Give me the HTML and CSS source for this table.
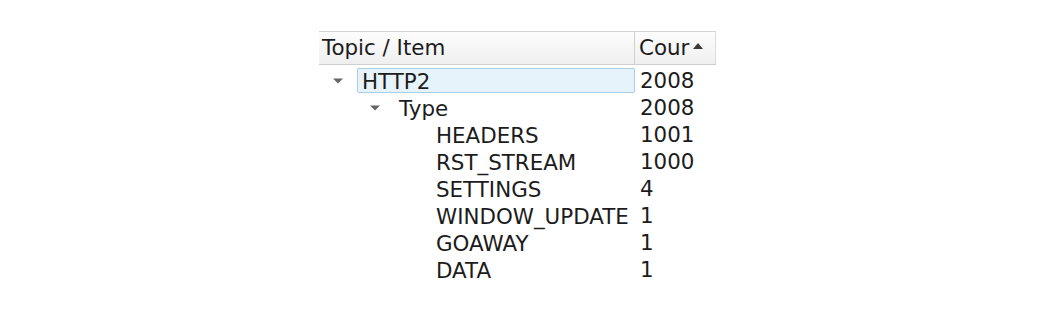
FILE: index.html
```html
<!DOCTYPE html>
<html>
<head>
<meta charset="utf-8">
<link rel="stylesheet" href="styles.css">
</head>
<body>
<div class="tree">
  <div class="header">
    <div class="hcell hname">Topic / Item</div>
    <div class="hcell hcount">Cour<span class="sort"></span></div>
  </div>
  <div class="body">
    <div class="row">
      <div class="name"><span class="arrow"><svg width="10" height="6" viewBox="0 0 10 6"><path d="M0 0.5H10L5 5.5Z"/></svg></span><span class="label sel">HTTP2</span></div>
      <div class="count">2008</div>
    </div>
    <div class="row">
      <div class="name"><span class="indent"></span><span class="arrow"><svg width="10" height="6" viewBox="0 0 10 6"><path d="M0 0.5H10L5 5.5Z"/></svg></span><span class="label">Type</span></div>
      <div class="count">2008</div>
    </div>
    <div class="row">
      <div class="name"><span class="indent"></span><span class="indent"></span><span class="arrow"></span><span class="label">HEADERS</span></div>
      <div class="count">1001</div>
    </div>
    <div class="row">
      <div class="name"><span class="indent"></span><span class="indent"></span><span class="arrow"></span><span class="label">RST_STREAM</span></div>
      <div class="count">1000</div>
    </div>
    <div class="row">
      <div class="name"><span class="indent"></span><span class="indent"></span><span class="arrow"></span><span class="label">SETTINGS</span></div>
      <div class="count">4</div>
    </div>
    <div class="row">
      <div class="name"><span class="indent"></span><span class="indent"></span><span class="arrow"></span><span class="label">WINDOW_UPDATE</span></div>
      <div class="count">1</div>
    </div>
    <div class="row">
      <div class="name"><span class="indent"></span><span class="indent"></span><span class="arrow"></span><span class="label">GOAWAY</span></div>
      <div class="count">1</div>
    </div>
    <div class="row">
      <div class="name"><span class="indent"></span><span class="indent"></span><span class="arrow"></span><span class="label">DATA</span></div>
      <div class="count">1</div>
    </div>
  </div>
</div>
</body>
</html>
```

FILE: styles.css
```css
html, body {
  margin: 0;
  padding: 0;
  background: #ffffff;
}
body {
  font-family: "DejaVu Sans", sans-serif;
  font-size: 21.4px;
  color: #1c1c1c;
}
.tree {
  padding: 31px 0 0 319px;
  width: 397px;
}
.header {
  display: grid;
  grid-template-columns: 316px 81px;
  height: 32px;
  border-top: 1px solid #d4d4d4;
  border-bottom: 1px solid #cfcfcf;
  background: linear-gradient(#fdfdfd, #efefef);
}
.hcell {
  display: flex;
  align-items: center;
  line-height: 32px;
  white-space: nowrap;
  overflow: hidden;
}
.hname {
  padding-left: 3px;
  border-right: 1px solid #d0d0d0;
}
.hcount {
  padding-left: 4px;
  border-right: 1px solid #dcdcdc;
}
.sort {
  display: inline-block;
  margin-left: 4px;
  margin-top: -5px;
  width: 0;
  height: 0;
  border-left: 5px solid transparent;
  border-right: 5px solid transparent;
  border-bottom: 6px solid #3a3a3a;
}
.body {
  padding-top: 2px;
}
.row {
  display: grid;
  grid-template-columns: 316px 81px;
  height: 27px;
}
.name {
  display: flex;
  align-items: center;
  white-space: nowrap;
}
.indent {
  flex: 0 0 37px;
}
.arrow {
  flex: 0 0 38px;
  display: flex;
  justify-content: center;
  align-items: center;
  padding-top: 1px;
}
.arrow svg {
  fill: #666666;
  margin-right: 1px;
}
.label {
  flex: 1;
  height: 25px;
  line-height: 25px;
  padding-left: 4px;
  border: 1px solid transparent;
  box-sizing: border-box;
}
.label.sel {
  background: #e7f3fb;
  border-color: #a9cfe8;
  border-radius: 2px;
}
.count {
  display: flex;
  align-items: center;
  padding-left: 5px;
}
```
